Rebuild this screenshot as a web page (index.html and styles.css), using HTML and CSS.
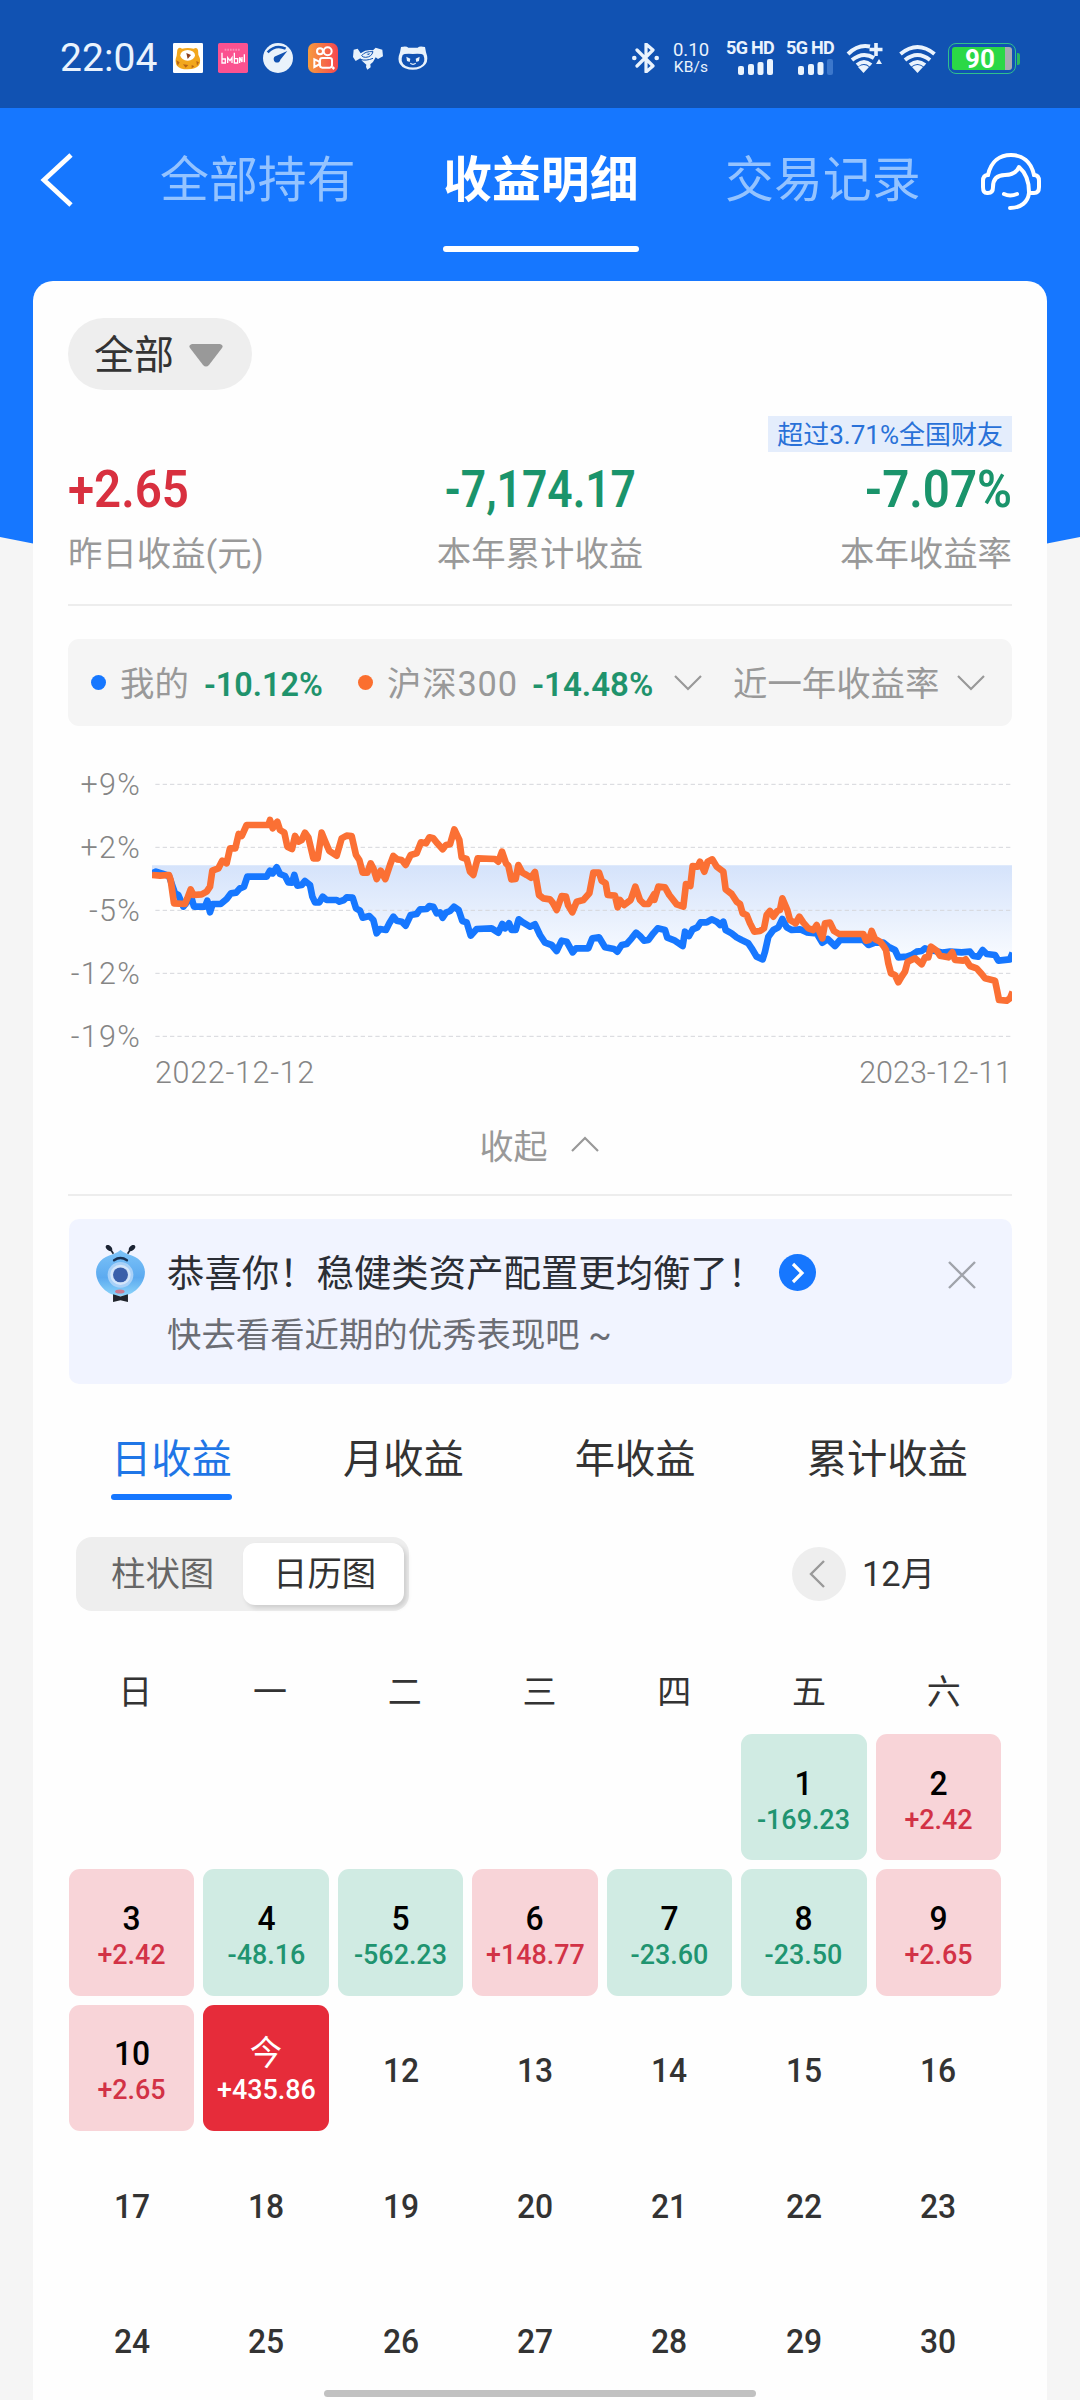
FILE: index.html
```html
<!DOCTYPE html>
<html lang="zh-CN">
<head>
<meta charset="utf-8">
<title>收益明细</title>
<link rel="stylesheet" href="styles.css">
</head>
<body>
<div class="screen">
  <header class="status">
    <span class="time">22:04</span>
    <div class="notif">
      <svg viewBox="0 0 90 90"><rect width="90" height="90" rx="4" fill="#fff"/><path d="M13 20q5-10 14-3q17-4 35 0q10-6 13 4q1 8 1 14q10 18 2 32q-10 12-34 12T12 68q-8-12-1-30z" fill="#f2a71d"/><path d="M10 52l10 6-6 10zM70 54l8 4-6 10zM30 64l8 10 8-8zM56 66l8 4-8 6z" fill="#b86514"/><ellipse cx="44" cy="37" rx="22" ry="16" fill="#fff"/><path d="M40 30l14 6-10 12z" fill="#8a3d1d"/></svg>
      <svg viewBox="0 0 90 90"><rect width="90" height="90" rx="5" fill="#fb5290"/><path d="M20 20h48" stroke="#fa8db7" stroke-width="6" stroke-dasharray="5 3"/><path d="M12 29v31h10V48H12M29 60V44l7 9 6-9v16M49 29v31h10V47H49M65 60V43l7 14V42M79 34v24" fill="none" stroke="#fff" stroke-width="4"/></svg>
      <svg viewBox="0 0 90 90"><circle cx="45" cy="45" r="45" fill="#e9f2fb"/><path d="M14 28Q38 3 68 17" fill="none" stroke="#1152b2" stroke-width="8"/><path d="M73 24L52 50a10 10 0 1 1-13-11z" fill="#1152b2"/></svg>
      <svg viewBox="0 0 90 90"><defs><linearGradient id="ks" x2="1"><stop stop-color="#f69b3d"/><stop offset="1" stop-color="#f5474f"/></linearGradient></defs><rect width="90" height="90" rx="20" fill="url(#ks)"/><g fill="none" stroke="#fff" stroke-width="6"><circle cx="36" cy="25" r="9"/><circle cx="59" cy="25" r="12"/><rect x="36" y="45" width="36" height="29" rx="7"/><path d="M34 56L19 49v23l15-8z"/></g><path d="M76 70l5 5-5 6-5-6z" fill="#fff"/></svg>
      <svg viewBox="0 0 90 90"><path d="M2 20l12-3 9 14Q40 18 60 22l8-8 20 6 2 20-15 8-7-5-8 14-8 7 1 9-10 7-4-8 1-7Q26 56 22 46L8 54 0 42z" fill="#e9f2fb"/><path d="M26 38q10-14 34-12-4 16-22 17-9 0-12-5M22 49q16 6 38-3" fill="none" stroke="#1152b2" stroke-width="3"/><path d="M40 33l12-2-5 5z" fill="#1152b2"/></svg>
      <svg viewBox="0 0 90 90"><path d="M9 12q17-4 22 2h28q5-6 22-2l3 16q13 34-17 48-22 9-46 0Q-8 62 6 28z" fill="#e9f2fb"/><path d="M14 36q5-5 31-3 26-2 31 3 10 22-9 33-22 9-44 0Q4 58 14 36z" fill="#1152b2"/><path d="M25 41l12 6-2 10-8-3zM65 41l-12 6 2 10 8-3z" fill="#e9f2fb"/><path d="M37 61q8 6 16 0" stroke="#e9f2fb" stroke-width="4" fill="none"/></svg>
    </div>
    <div class="sys">
      <svg class="bt" viewBox="0 0 27 30"><path d="M5 7l16 16-7 6V1l7 6L5 23" fill="none" stroke="#eaf3fd" stroke-width="3.200" stroke-linejoin="round" stroke-linecap="round"/><circle cx="2.300" cy="15" r="2.300" fill="#eaf3fd"/><circle cx="24.700" cy="15" r="2.300" fill="#eaf3fd"/></svg>
      <div class="speed"><b>0.10</b><i>KB/s</i></div>
      <div class="sim"><b>5G HD</b><svg viewBox="0 0 36 16"><g fill="#eaf3fd"><rect y="7" width="6" height="9" rx="2"/><rect x="10" y="5" width="6" height="11" rx="2"/><rect x="19.500" y="3" width="6" height="13" rx="2"/><rect x="29" width="6" height="16" rx="2"/></g></svg></div>
      <div class="sim"><b>5G HD</b><svg viewBox="0 0 36 16"><g fill="#eaf3fd"><rect y="7" width="6" height="9" rx="2"/><rect x="10" y="5" width="6" height="11" rx="2"/><rect x="19.500" y="3" width="6" height="13" rx="2"/><rect x="29" width="6" height="16" rx="2" fill="#3c77cb"/></g></svg></div>
      <svg class="wifi" viewBox="0 0 37 30"><g fill="none" stroke="#eaf3fd" stroke-width="4"><path d="M2 11Q12 1 24 3.500"/><path d="M6 17q11-9 22-2"/><path d="M11 22q7-6 14 0"/></g><path d="M12 24q6-4 11 0l-5.500 6z" fill="#eaf3fd"/><path d="M30 0v13M23.500 6.500h13" stroke="#eaf3fd" stroke-width="3.600"/><path d="M33 16l3 5h-6z" fill="#eaf3fd"/></svg>
      <svg class="wifi w2" viewBox="0 0 37 30"><g fill="none" stroke="#eaf3fd" stroke-width="4"><path d="M1.500 11q17-14 34 0"/><path d="M6 17q12.500-10 25 0"/><path d="M11 22q7.500-6 15 0"/></g><path d="M13 24q5.500-4 11 0l-5.500 6z" fill="#eaf3fd"/></svg>
      <div class="battery"><span>90</span></div>
    </div>
  </header>

  <nav class="top">
    <svg class="back" viewBox="0 0 34 56"><path d="M31 3L4 28l27 25" fill="none" stroke="#fff" stroke-width="4.800"/></svg>
    <span class="tab">全部持有</span>
    <span class="tab active">收益明细</span>
    <span class="tab">交易记录</span>
    <svg class="service" viewBox="0 0 60 58"><g fill="none" stroke="#fff" stroke-width="4" stroke-linecap="round" stroke-linejoin="round"><path d="M7 23C10 9 19 3 30 3s20 6 23 20"/><path d="M7 23q-5 0-5 6v6q0 6 4 6h1q5 0 5-6c0-9 5-12 12-12 8 0 12-3 14-8 7 6 10 14 10 25"/><path d="M53 23q5 0 5 6v6q0 6-5 6h-5C47 50 40 56 29 56M23 42q6 3 13 0"/></g></svg>
  </nav>

  <main class="card">
    <div class="picker">全部<svg viewBox="0 0 34 23"><path d="M3 0h28q4 1 2 4L20 21q-3 3-6 0L1 4Q-1 1 3 0z" fill="#999"/></svg></div>

    <section class="summary">
      <div><div class="num up"><span>+2.65</span></div><p>昨日收益(元)</p></div>
      <div class="mid"><div class="num down"><span>-7,174.17</span></div><p>本年累计收益</p></div>
      <div class="end"><em class="badge">超过3.71%全国财友</em><div class="num down"><span>-7.07%</span></div><p>本年收益率</p></div>
    </section>

    <section class="legend">
      <i class="dot"></i><span class="l1">我的</span><b class="v1">-10.12%</b>
      <i class="dot orange"></i><span class="l2">沪深300</span><b class="v2">-14.48%</b>
      <svg class="chev" viewBox="0 0 28 16"><path d="M1 1l13 13L27 1"/></svg>
      <span class="l3">近一年收益率</span>
      <svg class="chev" viewBox="0 0 28 16"><path d="M1 1l13 13L27 1"/></svg>
    </section>

    <section class="chart">
      <div class="axis"><span>+9%</span><span>+2%</span><span>-5%</span><span>-12%</span><span>-19%</span></div>
      <div class="plot">
        <svg viewBox="306 90 2580 786">
          <defs>
            <linearGradient id="fade" gradientUnits="userSpaceOnUse" x1="0" y1="346" x2="0" y2="640"><stop stop-color="#d5e3fb"/><stop offset="1" stop-color="#fafcff"/></linearGradient>
          </defs>
          <path fill="url(#fade)" d="M306 346H2886V610L2880 628 2845 632 2835 615 2810 612 2798 600 2785 620 2770 618 2760 605 2700 605 2640 600 2615 603 2600 605 2585 615 2545 622 2535 600 2515 590 2500 578 2455 585 2440 570 2370 570 2355 588 2333 567 2317 578 2300 550 2250 538 2210 532 2197 507 2185 532 2155 560 2138 628 2120 620 2095 580 2060 562 2027 540 2020 515 1985 508 1952 517 1917 558 1898 588 1852 563 1845 540 1823 535 1795 570 1758 548 1702 605 1665 592 1647 562 1627 565 1615 595 1568 607 1535 572 1520 603 1485 578 1455 523 1406 508 1397 540 1345 548 1280 537 1262 557 1237 513 1212 470 1178 503 1138 468 1082 495 1067 527 1030 500 1008 540 980 550 958 498 938 503 908 443 860 450 808 457 787 440 765 393 742 407 715 397 680 352 650 380 592 380 570 415 530 447 488 462 432 470 400 470 357 378 306 370z"/>
          <path class="grid" d="M316 103H2886M316 292H2886M316 481H2886M316 670H2886M316 859H2886"/>
          <polyline class="line mine" points="306,370 318,365 335,370 357,378 375,430 385,435 400,470 412,455 422,435 432,470 465,470 472,452 480,487 488,462 512,462 530,447 543,430 558,428 570,415 582,410 592,380 650,380 660,362 668,370 680,352 690,372 705,378 715,397 726,398 733,375 742,407 755,405 765,393 780,405 787,440 795,457 808,457 818,440 830,450 860,450 868,455 882,450 890,442 908,443 918,475 930,482 938,503 958,498 970,510 980,550 990,537 1008,540 1018,520 1030,500 1040,512 1055,515 1067,527 1082,495 1100,492 1110,478 1130,477 1138,468 1150,470 1160,490 1170,487 1178,503 1188,488 1200,483 1212,470 1226,480 1237,513 1250,517 1262,557 1280,537 1325,535 1345,548 1357,522 1365,535 1377,520 1385,540 1397,540 1406,508 1420,518 1440,530 1455,523 1470,555 1485,578 1505,585 1520,603 1535,572 1550,575 1568,607 1578,595 1615,595 1627,565 1647,562 1665,592 1692,597 1702,605 1715,585 1730,582 1745,565 1758,548 1770,558 1782,572 1795,570 1810,550 1823,535 1845,540 1852,563 1875,572 1898,588 1905,545 1917,558 1928,538 1942,532 1952,517 1970,517 1985,508 2000,515 2010,525 2020,515 2027,540 2045,550 2060,562 2075,570 2095,580 2105,595 2120,620 2138,628 2145,605 2155,560 2170,540 2185,532 2197,507 2210,532 2225,540 2250,538 2270,547 2300,550 2317,578 2333,567 2355,588 2370,570 2440,570 2455,585 2475,578 2500,578 2515,590 2535,600 2545,622 2570,620 2585,615 2600,605 2615,603 2625,595 2640,600 2680,608 2700,605 2735,607 2760,605 2770,618 2785,620 2798,600 2810,612 2835,615 2845,632 2880,628 2888,608"/>
          <polyline class="line index" points="306,375 330,377 357,375 362,390 372,460 405,462 412,445 422,418 430,435 455,433 470,425 480,410 487,362 505,355 517,332 530,340 540,295 556,295 566,252 575,258 590,225 655,225 660,210 668,235 682,215 690,240 703,248 712,290 726,297 735,258 745,275 755,270 765,248 775,262 790,325 803,325 815,248 826,275 838,303 860,317 875,265 890,257 905,258 918,315 928,330 938,368 952,368 962,340 970,355 980,387 992,362 1006,387 1020,345 1030,318 1042,328 1055,330 1067,345 1082,315 1100,310 1113,277 1128,280 1138,262 1150,265 1162,280 1178,298 1188,285 1200,283 1213,238 1228,270 1235,322 1250,327 1260,365 1270,375 1283,325 1335,327 1345,335 1356,305 1368,340 1375,347 1384,388 1397,387 1405,345 1417,368 1430,375 1443,383 1455,366 1467,435 1480,445 1500,448 1508,458 1520,480 1535,438 1548,440 1554,465 1567,487 1580,455 1600,450 1618,430 1630,368 1647,368 1655,392 1667,400 1673,435 1695,437 1703,472 1710,450 1722,465 1742,450 1756,410 1770,450 1782,462 1795,462 1813,432 1813,450 1825,410 1845,412 1858,435 1880,463 1900,470 1908,402 1921,408 1928,348 1943,350 1950,335 1963,365 1973,335 1987,328 2000,350 2020,365 2027,418 2045,432 2060,455 2070,462 2078,490 2090,495 2100,520 2113,545 2130,543 2142,535 2150,495 2160,483 2170,500 2182,483 2190,480 2197,445 2212,480 2220,510 2237,520 2248,500 2260,518 2275,535 2290,540 2300,525 2317,565 2325,520 2340,518 2352,543 2367,552 2440,552 2448,572 2457,570 2465,543 2475,567 2490,575 2502,590 2508,600 2515,640 2523,670 2535,675 2545,697 2555,680 2565,665 2573,635 2595,625 2615,643 2625,622 2635,622 2643,590 2660,602 2670,617 2695,622 2707,607 2715,630 2740,632 2747,628 2760,648 2780,655 2795,672 2805,685 2835,692 2840,715 2847,750 2870,752 2880,745 2888,725"/>
        </svg>
        <div class="dates"><span>2022-12-12</span><span class="d2">2023-12-11</span></div>
      </div>
    </section>

    <div class="fold">收起<svg class="chev" viewBox="0 0 28 16"><path d="M1 15L14 2l13 13"/></svg></div>

    <section class="banner">
      <svg class="mascot" viewBox="0 0 150 168"><defs><linearGradient id="body" x2="0" y2="1"><stop stop-color="#7cc3f8"/><stop offset=".6" stop-color="#5caaf0"/><stop offset="1" stop-color="#8bd4fa"/></linearGradient></defs><path d="M75 15q8 8 22 12c32 8 50 28 50 53 0 35-33 70-72 70S3 115 3 80c0-25 18-45 50-53Q67 23 75 15z" fill="url(#body)"/><path d="M54 26L45 12M96 26l9-14" stroke="#1c2434" stroke-width="5"/><ellipse cx="41" cy="9" rx="11" ry="7" transform="rotate(42 41 9)" fill="#1c2434"/><ellipse cx="109" cy="9" rx="11" ry="7" transform="rotate(-42 109 9)" fill="#1c2434"/><path d="M56 45q19-13 38 0" stroke="#193052" stroke-width="7" fill="none" stroke-linecap="round"/><circle cx="75" cy="88" r="38" fill="#a9d1f8"/><circle cx="75" cy="88" r="30" fill="#d3e5fa"/><circle cx="75" cy="88" r="22" fill="#3a5faa"/><ellipse cx="73" cy="137" rx="14" ry="6" fill="#c97c93"/><path d="M53 145l22 7 22-7v23l-22-5-22 5z" fill="#20242c"/></svg>
      <div class="msg"><h3>恭喜你！稳健类资产配置更均衡了！</h3><p>快去看看近期的优秀表现吧 ~</p></div>
      <svg class="go" viewBox="0 0 37 37"><circle cx="18.500" cy="18.500" r="18.500" fill="#1677ff"/><path d="M14 10l9 9-9 9" fill="none" stroke="#fff" stroke-width="3.200"/></svg>
      <svg class="close" viewBox="0 0 28 28"><path d="M1 1l26 26M27 1L1 27" stroke="#a0a3ab" stroke-width="2.400"/></svg>
    </section>

    <nav class="periods"><span class="on">日收益</span><span>月收益</span><span>年收益</span><span>累计收益</span></nav>

    <div class="tools">
      <div class="toggle"><span>柱状图</span><span class="on">日历图</span></div>
      <div class="month"><i><svg viewBox="0 0 16 28"><path d="M15 1L2 14l13 13" fill="none" stroke="#999" stroke-width="2.400"/></svg></i>12月</div>
    </div>

    <div class="week"><span>日</span><span>一</span><span>二</span><span>三</span><span>四</span><span>五</span><span>六</span></div>
    <div class="days">
      <div class="day loss first"><b>1</b><span>-169.23</span></div>
      <div class="day gain"><b>2</b><span>+2.42</span></div>
      <div class="day gain"><b>3</b><span>+2.42</span></div>
      <div class="day loss"><b>4</b><span>-48.16</span></div>
      <div class="day loss"><b>5</b><span>-562.23</span></div>
      <div class="day gain"><b>6</b><span>+148.77</span></div>
      <div class="day loss"><b>7</b><span>-23.60</span></div>
      <div class="day loss"><b>8</b><span>-23.50</span></div>
      <div class="day gain"><b>9</b><span>+2.65</span></div>
      <div class="day gain"><b>10</b><span>+2.65</span></div>
      <div class="day today"><b>今</b><span>+435.86</span></div>
      <div class="day"><b>12</b></div><div class="day"><b>13</b></div><div class="day"><b>14</b></div><div class="day"><b>15</b></div><div class="day"><b>16</b></div>
      <div class="day"><b>17</b></div><div class="day"><b>18</b></div><div class="day"><b>19</b></div><div class="day"><b>20</b></div><div class="day"><b>21</b></div><div class="day"><b>22</b></div><div class="day"><b>23</b></div>
      <div class="day"><b>24</b></div><div class="day"><b>25</b></div><div class="day"><b>26</b></div><div class="day"><b>27</b></div><div class="day"><b>28</b></div><div class="day"><b>29</b></div><div class="day"><b>30</b></div>
    </div>
  </main>
  <div class="home"></div>
</div>
</body>
</html>
```
FILE: styles.css
```css
* { box-sizing: border-box; margin: 0; padding: 0; }
body { font-family: Roboto, "Noto Sans CJK SC", sans-serif; color: #333; }
svg { display: block; flex: none; }
i, em { font-style: normal; }
span, b { white-space: nowrap; }

.screen {
  position: relative;
  width: 1080px;
  height: 2400px;
  overflow: hidden;
  background: #f5f5f5;
}
/* blue backdrop, its lower edge sloping in behind the card */
.screen::before {
  content: "";
  position: absolute;
  inset: 0 0 auto 0;
  height: 560px;
  background: #1677ff;
  clip-path: polygon(0 0, 1080px 0, 1080px 537px, 1047px 543.500px, 540px 560px, 33px 543.500px, 0 537px);
}
.status, .top, .card { position: relative; }

/* status bar */
.status { display: flex; align-items: flex-start; height: 108px; padding: 43px 60px 0 60px; background: #1152b2; color: #eaf3fd; }
.time { width: 113px; font-size: 39px; line-height: 31px; letter-spacing: 0.1px; }
.notif { display: flex; gap: 15px; }
.notif svg { width: 30px; height: 30px; }
.sys { display: flex; margin-left: auto; }
.bt { width: 27px; height: 30px; }
.speed { display: flex; flex-direction: column; align-items: center; width: 36px; margin: -2px 1px 0 14px; }
.speed b { font-weight: 400; font-size: 18.500px; line-height: 18px; }
.speed i { font-size: 15.500px; line-height: 17px; letter-spacing: 0.2px; }
.sim { display: flex; flex-direction: column; align-items: flex-end; width: 50px; margin: -2px 0 0 14px; }
.sim + .sim { margin-left: 10px; }
.sim b { font-size: 18px; line-height: 14px; letter-spacing: -0.7px; }
.sim svg { width: 36px; height: 16px; margin-top: 4px; }
.wifi { width: 37px; height: 30px; margin-left: 12px; }
.wifi.w2 { margin-left: 16px; }
.battery { position: relative; width: 68px; height: 31px; margin: 0 4px 0 12px; padding: 3px; border: 1.500px solid #2fc08c; border-radius: 8px; }
.battery::after { content: ""; position: absolute; right: -5px; top: 9px; width: 3px; height: 12px; border-radius: 0 2px 2px 0; background: #29b860; }
.battery span { display: block; height: 100%; padding-right: 4px; border-radius: 3px; background: linear-gradient(90deg, #2bd846 88%, #a9acb0 88%); color: #fff; font-size: 26px; font-weight: 700; line-height: 24px; text-align: center; }

/* page tabs */
.top { display: flex; align-items: flex-start; height: 173px; padding: 43px 37px 0 40px; }
.back { width: 34px; height: 56px; margin: 1px 86px 0 0; }
.tab { width: 196px; margin-right: 87px; font-size: 48.900px; line-height: 60px; color: #94c3ff; }
.tab.active { position: relative; height: 101px; margin-right: 86px; color: #fff; font-weight: 700; }
.tab.active::after { content: ""; position: absolute; left: 0; right: 0; top: 95px; height: 6px; border-radius: 3px; background: #fff; }
.tab:nth-of-type(3) { margin-right: 60px; }
.service { width: 60px; height: 58px; margin-top: 1px; }

/* card */
.card { margin: 0 33px; height: 2140px; padding: 37px 35px 0; border-radius: 20px; background: #fefefe; }
.picker { display: flex; align-items: center; width: 184px; height: 72px; padding: 0 0 4px 26px; border-radius: 36px; background: #eee; font-size: 40px; }
.picker svg { width: 34px; height: 23px; margin: 6px 0 0 15px; }

.summary { display: grid; grid-template-columns: 1fr 1fr 1fr; height: 216px; padding-top: 78px; border-bottom: 2px solid #ededed; }
.summary > div { position: relative; }
.summary .mid { text-align: center; }
.summary .end { text-align: right; }
.num { height: 44px; font-size: 51.600px; font-weight: 600; line-height: 44px; }
.num span { display: inline-block; transform: scaleX(.92); transform-origin: 0 50%; }
.mid .num span { transform: scaleX(.86); transform-origin: 50% 50%; }
.end .num span { transform-origin: 100% 50%; }
.summary p { margin-top: 21px; font-size: 34.400px; line-height: 42px; color: #999; }
.up { color: #d8303f; }
.down { color: #1a946b; }
.badge { position: absolute; right: 0; top: -52px; height: 36px; padding: 0 9px; background: #e4edfc; color: #2971d8; font-size: 26px; line-height: 38px; white-space: nowrap; }

.legend { display: flex; align-items: center; height: 87px; margin-top: 33px; padding: 0 24px 0 23px; border-radius: 11px; background: #f5f5f5; font-size: 34.400px; color: #999; }
.legend span { margin-top: -3px; }
.dot { flex: none; width: 15px; height: 15px; margin-right: 14px; border-radius: 50%; background: #1677ff; }
.dot.orange { background: #fb6f2f; }
.legend .l1 { width: 84px; }
.legend .l2 { width: 145px; letter-spacing: 0.8px; }
.legend .l3 { width: 224px; }
.legend b { margin-top: 4px; color: #1f936c; font-size: 33px; font-weight: 600; transform-origin: 0 50%; }
.legend .v1 { width: 154px; transform: scaleX(.98); }
.legend .v2 { width: 142px; }
.chev { width: 28px; height: 16px; fill: none; stroke: #999; stroke-width: 2.200; }
.legend .chev + .l3 { margin-left: 31px; }

.chart { display: flex; margin-top: 54px; }
.axis { display: flex; flex-direction: column; width: 73px; margin: -28px 11px 0 0; text-align: right; font-size: 30.500px; font-weight: 300; letter-spacing: 1.300px; color: #858585; }
.axis span { height: 63px; line-height: 66px; }
.plot { width: 860px; }
.plot svg { width: 860px; height: 262px; }
.grid { stroke: #d5d7db; stroke-width: 3; stroke-dasharray: 13 9; fill: none; }
.line { fill: none; stroke-width: 20; stroke-linejoin: round; stroke-linecap: butt; }
.mine { stroke: #1677ff; }
.index { stroke: #fb7034; }
.dates { display: flex; justify-content: space-between; padding: 12px 0 0 3px; font-size: 30.500px; font-weight: 300; line-height: 38px; letter-spacing: 0.7px; color: #858585; }
.dates .d2 { letter-spacing: 0; }

.fold { display: flex; align-items: center; justify-content: center; height: 104px; padding: 2px 2px 0 0; font-size: 34px; color: #999; border-bottom: 2px solid #ededed; }
.fold .chev { margin-left: 23px; }

.banner { display: flex; align-items: flex-start; height: 165px; margin: 23px 0 0 1px; padding: 26px 36px 0 26px; border-radius: 10px; background: #f1f4ff; }
.mascot { width: 51px; height: 57px; margin-right: 21px; }
.msg { width: 612px; }
.msg h3 { font-weight: 400; font-size: 37.400px; line-height: 58px; color: #2b2e35; white-space: nowrap; }
.msg p { margin-top: 10px; font-size: 34.400px; line-height: 44px; color: #6b6d74; }
.go { width: 37px; height: 37px; margin-top: 9px; }
.close { width: 28px; height: 28px; margin: 16px 0 0 auto; }

.periods { display: flex; gap: 111px; margin: 43px 0 0 43px; font-size: 40.300px; line-height: 65px; }
.periods span { height: 73px; }
.periods .on { position: relative; color: #1f76e6; }
.periods .on::after { content: ""; position: absolute; left: 0; right: 0; bottom: 0; height: 6px; border-radius: 3px; background: #1677ff; }

.tools { display: flex; align-items: center; justify-content: space-between; margin-top: 37px; padding: 0 80px 0 8px; font-size: 34.400px; }
.toggle { display: flex; width: 333px; height: 74px; padding: 6px 5px 6px 0; border-radius: 16px; background: #eee; line-height: 62px; color: #666; }
.toggle span { width: 167px; padding-left: 35px; }
.toggle .on { width: 161px; padding-left: 30px; border-radius: 12px; background: #fff; color: #333; box-shadow: 3px 3px 5px rgba(0,0,0,.14); }
.month { display: flex; align-items: center; width: 140px; line-height: 50px; }
.month i { display: flex; flex: none; align-items: center; justify-content: center; width: 54px; height: 54px; margin-right: 16px; padding-right: 4px; border-radius: 50%; background: #eee; }
.month { white-space: nowrap; }
.month svg { width: 16px; height: 28px; }

.week { display: grid; grid-template-columns: repeat(7, 1fr); height: 123px; margin: 0 1px 0 0; padding-top: 57px; text-align: center; font-size: 34px; line-height: 48px; }
.days { display: grid; grid-template-columns: repeat(7, 1fr); grid-auto-rows: 126.300px; gap: 9px; width: 932px; margin-left: 1px; }
.day { display: flex; flex-direction: column; align-items: center; justify-content: center; padding-top: 7px; border-radius: 11px; font-size: 28px; font-weight: 500; }
.day:not(.gain):not(.loss):not(.today) { padding-top: 6px; }
.first { grid-column: 6; }
.day b { font-size: 33.500px; font-weight: 500; line-height: 37px; transform: scaleX(.95); }
.day span { line-height: 35px; transform: scaleX(.96); }
.gain, .loss { color: #000; }
.gain { background: #f8d4d8; }
.gain span { color: #d23246; }
.loss { background: #d0ebe3; }
.loss span { color: #209470; }
.today { background: #e62c3a; color: #fff; }
.today b { font-size: 34px; font-weight: 400; }

.home { position: absolute; left: 324px; bottom: 3px; width: 432px; height: 7px; border-radius: 4px; background: #c1c1c1; }
```
